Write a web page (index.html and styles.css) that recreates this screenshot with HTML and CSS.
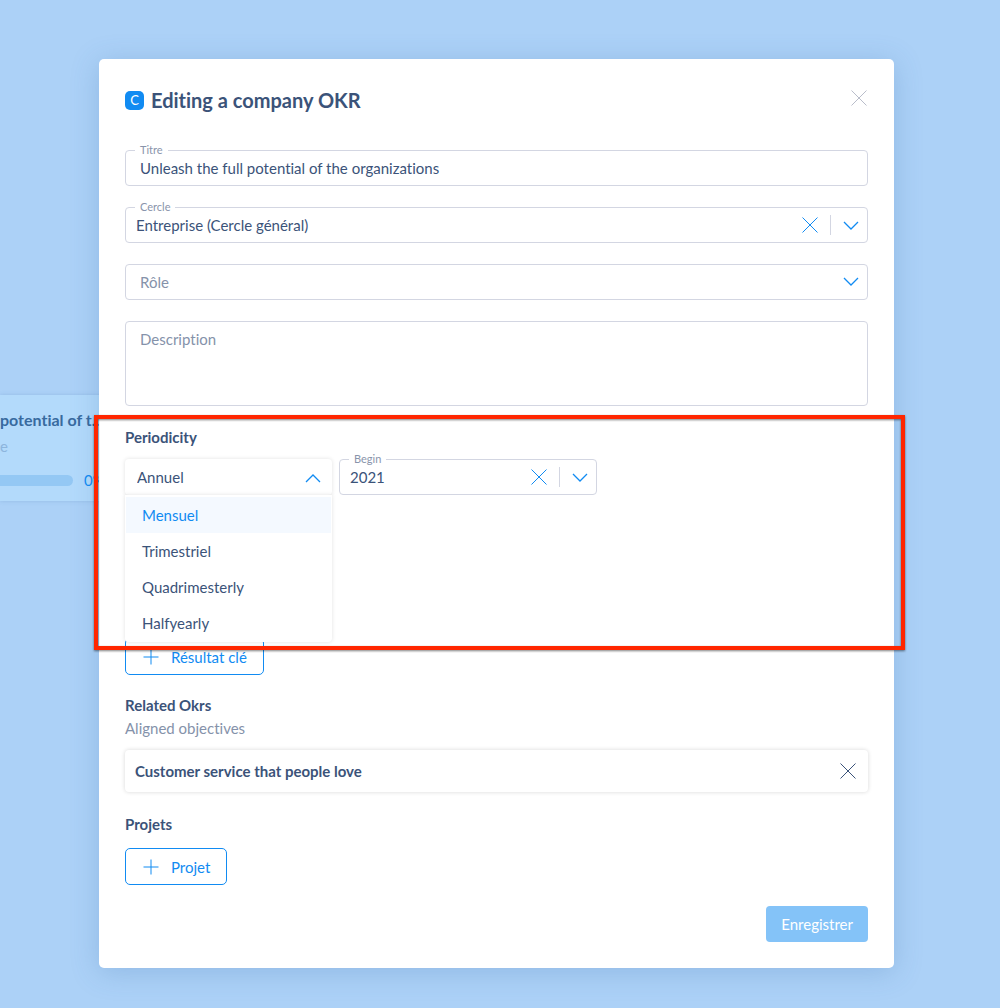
FILE: index.html
```html
<!DOCTYPE html>
<html lang="fr">
<head>
  <meta charset="UTF-8">
  <meta name="viewport" content="width=device-width, initial-scale=1.0">
  <title>Editing a company OKR</title>
  <link rel="stylesheet" href="styles.css">
</head>
<body>

  <div class="okr-card">
    <div class="okr-title">potential of t...</div>
    <div class="okr-owner">e</div>
    <div class="okr-progress">
      <div class="okr-bar"></div>
      <span>0%</span>
    </div>
  </div>

  <form class="modal">
    <header class="modal-header">
      <span class="badge">C</span>
      <h1>Editing a company OKR</h1>
      <button type="button" class="icon-btn close" aria-label="Close">
        <svg width="16" height="16" viewBox="0 0 16 16"><path d="M.5 .5l15 15M15.5 .5l-15 15"/></svg>
      </button>
    </header>

    <div class="field">
      <label class="floating" for="title">Titre</label>
      <input type="text" id="title" value="Unleash the full potential of the organizations">
    </div>

    <div class="field">
      <label class="floating" for="circle">Cercle</label>
      <select id="circle" class="tight">
        <option>Entreprise (Cercle général)</option>
      </select>
      <button type="button" class="icon-btn clear" aria-label="Clear">
        <svg width="16" height="16" viewBox="0 0 16 16"><path d="M.5 .5l15 15M15.5 .5l-15 15"/></svg>
      </button>
      <span class="divider"></span>
      <svg class="chevron" width="16" height="16" viewBox="0 0 16 16"><path d="M1 5l7 7l7-7"/></svg>
    </div>

    <div class="field">
      <select id="role" class="empty" aria-label="Rôle">
        <option>Rôle</option>
      </select>
      <svg class="chevron" width="16" height="16" viewBox="0 0 16 16"><path d="M1 4l7 7l7-7"/></svg>
    </div>

    <div class="field">
      <textarea id="description" placeholder="Description" aria-label="Description"></textarea>
    </div>

    <section class="period">
      <h2><label for="periodicity">Periodicity</label></h2>
      <div class="period-row">
        <div class="dropdown">
          <div class="dropdown-head">
            <select id="periodicity">
              <option>Annuel</option>
            </select>
            <svg class="chevron" width="16" height="16" viewBox="0 0 16 16"><path d="M1 13l7-7l7 7"/></svg>
          </div>
          <ul class="menu" role="listbox" aria-label="Periodicity">
            <li class="highlighted" role="option">Mensuel</li>
            <li role="option">Trimestriel</li>
            <li role="option">Quadrimesterly</li>
            <li role="option">Halfyearly</li>
          </ul>
        </div>
        <div class="field begin">
          <label class="floating" for="begin">Begin</label>
          <select id="begin" class="tight">
            <option>2021</option>
          </select>
          <button type="button" class="icon-btn clear" aria-label="Clear">
            <svg width="16" height="16" viewBox="0 0 16 16"><path d="M.5 .5l15 15M15.5 .5l-15 15"/></svg>
          </button>
          <span class="divider"></span>
          <svg class="chevron" width="16" height="16" viewBox="0 0 16 16"><path d="M1 5l7 7l7-7"/></svg>
        </div>
      </div>
      <div class="highlight-frame"></div>
    </section>

    <button type="button" class="add-btn">
      <svg width="16" height="16" viewBox="0 0 16 16"><path d="M8 .5v15M.5 8h15"/></svg>
      Résultat clé
    </button>

    <section class="related">
      <h2>Related Okrs</h2>
      <p>Aligned objectives</p>
      <div class="related-item">
        <span>Customer service that people love</span>
        <button type="button" class="icon-btn" aria-label="Remove">
          <svg width="16" height="16" viewBox="0 0 16 16"><path d="M.5 .5l15 15M15.5 .5l-15 15"/></svg>
        </button>
      </div>
    </section>

    <section class="projects">
      <h2>Projets</h2>
      <button type="button" class="add-btn">
        <svg width="16" height="16" viewBox="0 0 16 16"><path d="M8 .5v15M.5 8h15"/></svg>
        Projet
      </button>
    </section>

    <footer class="modal-footer">
      <button type="submit" class="save-btn">Enregistrer</button>
    </footer>
  </form>

</body>
</html>
```
FILE: styles.css
```css
* {
  box-sizing: border-box;
}
body {
  margin: 0;
  padding: 59px 106px 40px 99px;
  background-color: #acd1f7;
  color: #3b5379;
  font-family: Lato, sans-serif;
  font-size: 15px;
  line-height: 20px;
  font-variant-ligatures: none;
}
h1, h2, p, ul {
  margin: 0;
  padding: 0;
}
h2 {
  font-size: 15px;
  line-height: 20px;
}
svg {
  display: block;
  flex: none;
  fill: none;
  stroke: currentColor;
}
input, select, textarea, button {
  font: inherit;
  font-variant-ligatures: none;
  color: inherit;
  background: none;
  border: none;
  outline: none;
  margin: 0;
  padding: 0;
}
button {
  cursor: pointer;
}

/* card of the page behind the modal */
.okr-card {
  position: absolute;
  top: 395px;
  left: 0;
  width: 120px;
  height: 106px;
  padding-top: 15px;
  background-color: #b3dafb;
  box-shadow: 0 0 4px rgba(70, 120, 180, 0.25);
  white-space: nowrap;
}
.okr-title {
  color: #386a9f;
  font-size: 16px;
  font-weight: bold;
}
.okr-owner {
  margin-top: 6px;
  color: #8db5dd;
}
.okr-progress {
  display: flex;
  align-items: center;
  gap: 11px;
  margin-top: 14px;
  color: #118bf2;
}
.okr-bar {
  width: 73px;
  height: 11px;
  border-radius: 0 6px 6px 0;
  background-color: #94c8f4;
}

.modal {
  position: relative;
  padding: 26px;
  background-color: #fff;
  border-radius: 5px;
  box-shadow: 0 4px 28px rgba(60, 110, 170, 0.25);
}
.modal-header {
  display: flex;
  align-items: center;
  height: 30px;
  margin-bottom: 35px;
}
.modal-header h1 {
  flex: 1;
  margin-left: 7px;
  font-size: 20px;
  line-height: 30px;
}
.badge {
  width: 19px;
  height: 19px;
  border-radius: 5px;
  background-color: #118bf2;
  color: #fff;
  font-size: 13px;
  line-height: 18px;
  text-align: center;
}
.icon-btn {
  flex: none;
}
.close {
  margin: 0 1px 4px 0;
  color: #b9bdca;
}

.field {
  position: relative;
  display: flex;
  align-items: center;
  min-height: 36px;
  margin-bottom: 21px;
  border: 1px solid #d3d6e2;
  border-radius: 4px;
}
.field input, .field select {
  flex: 1;
  min-width: 0;
  height: 34px;
  padding: 0 14px;
  appearance: none;
}
.field .tight {
  padding: 0 10px;
}
.field .empty {
  color: #8592aa;
}
.field textarea {
  display: block;
  width: 100%;
  height: 83px;
  padding: 7px 14px;
  resize: none;
}
.field textarea::placeholder {
  color: #8592aa;
}
.floating {
  position: absolute;
  top: -8px;
  left: 9px;
  padding: 0 5px;
  background-color: #fff;
  color: #8994ab;
  font-size: 11px;
  line-height: 14px;
}
.clear, .chevron {
  color: #118bf2;
}
.divider {
  width: 1px;
  height: 20px;
  margin: 0 12px;
  background-color: #d3d6e2;
}
.chevron {
  margin-right: 8px;
  stroke-width: 1.3;
}

.period {
  position: relative;
  height: 211px;
}
.period-row {
  display: flex;
  gap: 7px;
  margin-top: 12px;
}
.dropdown {
  position: relative;
  width: 207px;
  border-radius: 4px;
  box-shadow: 0 0 4px rgba(0, 0, 0, 0.12);
}
.dropdown-head {
  display: flex;
  align-items: center;
  height: 36px;
}
.dropdown-head select {
  flex: 1;
  height: 36px;
  padding: 0 12px;
  appearance: none;
}
.dropdown-head .chevron {
  margin-right: 11px;
}
.menu {
  position: absolute;
  z-index: 1;
  top: 36px;
  left: 0;
  width: 100%;
  padding: 2px 1px 1px;
  background-color: #fff;
  border-radius: 0 0 4px 4px;
  box-shadow: 0 0 4px rgba(0, 0, 0, 0.12);
  list-style: none;
}
.menu li {
  padding: 8px 16px;
}
.menu .highlighted {
  background-color: #f4f9ff;
  color: #118bf2;
}
.begin {
  width: 258px;
  margin-bottom: 0;
}
.highlight-frame {
  position: absolute;
  z-index: 2;
  top: -12px;
  left: -31px;
  right: -37px;
  height: 235px;
  border: 4px solid #ff2600;
  filter: drop-shadow(0 1px 1px rgba(0, 0, 0, 0.5));
  pointer-events: none;
}

.add-btn {
  display: flex;
  align-items: center;
  gap: 12px;
  height: 37px;
  padding: 0 16px 0 17px;
  border: 1px solid #118bf2;
  border-radius: 5px;
  color: #118bf2;
}

.related {
  margin-top: 20px;
}
.related p {
  margin-top: 3px;
  color: #8592aa;
}
.related-item {
  display: flex;
  align-items: center;
  justify-content: space-between;
  height: 42px;
  margin-top: 12px;
  padding: 0 12px 0 10px;
  border-radius: 4px;
  box-shadow: 0 0 4px rgba(0, 0, 0, 0.16);
  font-weight: bold;
}
.projects {
  margin-top: 22px;
}
.projects .add-btn {
  margin-top: 14px;
}

.modal-footer {
  display: flex;
  justify-content: flex-end;
  margin-top: 21px;
}
.save-btn {
  height: 36px;
  padding: 0 15px;
  border-radius: 4px;
  background-color: #84c3f8;
  color: #fff;
}
```
